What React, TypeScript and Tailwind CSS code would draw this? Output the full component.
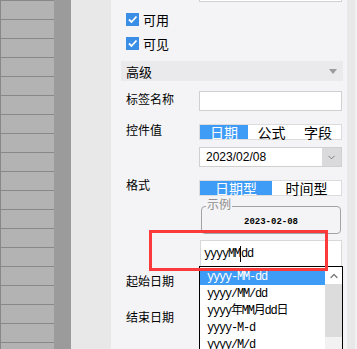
import { ChevronDown, ChevronUp } from 'lucide-react';

const cjk = { fontFamily: '"Noto Sans CJK SC", "Liberation Sans", sans-serif' };
const mono = { fontFamily: '"Liberation Mono", "Noto Sans CJK SC", monospace' };

function Check({ label }: { label: string }) {
  return (
    <div className="flex items-center h-[13px] pl-[5px] gap-[4px]">
      <div className="w-[13px] h-[13px] bg-[#3a8ee6] flex items-center justify-center">
        <svg width="11" height="11" viewBox="0 0 11 11">
          <path d="M2 5.5 L4.5 8 L9.5 2.5" stroke="white" strokeWidth="1.8" fill="none" />
        </svg>
      </div>
      <span className="text-[13px] text-black leading-none">{label}</span>
    </div>
  );
}

function Row({ label, children, cls }: { label: string; children?: React.ReactNode; cls: string }) {
  return (
    <div className={`flex items-center ${cls}`}>
      <div className="w-[78px] pl-[5px] text-[12px] text-black leading-none -mt-[5px]">{label}</div>
      <div className="w-[143px]">{children}</div>
    </div>
  );
}

function Tabs({ items, active, widths }: { items: string[]; active: number; widths: string[] }) {
  return (
    <div className="flex h-full border border-[#dcdcdf] bg-white">
      {items.map((t, i) => (
        <div
          key={t}
          className={`${widths[i]} flex items-center justify-center text-[14px] leading-none ${
            i === active ? 'bg-[#3f9cf6] text-white' : 'bg-white text-black'
          }`}
        >
          {t}
        </div>
      ))}
    </div>
  );
}

const formats = ['yyyy-MM-dd', 'yyyy/MM/dd', 'yyyy年MM月dd日', 'yyyy-M-d', 'yyyy/M/d'];

export default function App() {
  return (
    <div className="relative w-[357px] h-[349px] flex overflow-hidden" style={cjk}>
      {/* left strip */}
      <div className="w-[54px] h-full border-l border-[#888] bg-[#b3b3b3] flex flex-col">
        {Array.from({ length: 19 }).map((_, i) => (
          <div key={i} className="h-[19px] shrink-0 border-t border-[#888]" />
        ))}
      </div>
      <div className="w-[17px] h-full bg-[#9b9b9b]" />
      <div className="w-[40px] h-full bg-[#e8e8e8]" />

      {/* property panel */}
      <div className="w-[236px] h-full bg-[#f4f4f6] flex flex-col pl-[10px] pr-[4px]">
        <div className="ml-[78px] w-[143px] h-[2px] bg-white border-b border-x border-[#d0d0d0]" />
        <div className="mt-[11px]">
          <Check label="可用" />
        </div>
        <div className="mt-[11px]">
          <Check label="可见" />
        </div>

        <div className="mt-[11px] h-[20px] bg-[#eaeaec] flex items-center justify-between pl-[5px] pr-[6px]">
          <span className="text-[13px] leading-none text-black">高级</span>
          <svg width="8" height="5" viewBox="0 0 8 5">
            <path d="M0 0 H8 L4 5 Z" fill="#9b9b9b" />
          </svg>
        </div>

        <Row label="标签名称" cls="mt-[10px] h-[20px]">
          <div className="h-[20px] bg-white border border-[#d0d0d0]" />
        </Row>

        <Row label="控件值" cls="mt-[11px] h-[20px]">
          <Tabs items={['日期', '公式', '字段']} active={0} widths={['w-[48px]', 'w-[47px]', 'w-[46px]']} />
        </Row>

        <Row label="" cls="mt-[5px] h-[20px]">
          <div className="h-[20px] bg-white border border-[#d0d0d0] flex">
            <div className="flex-1 flex items-center pl-[6px] text-[12px] text-black leading-none" style={{ fontFamily: '"Liberation Sans", sans-serif' }}>
              2023/02/08
            </div>
            <div className="w-[19px] bg-[#dadadc] flex items-center justify-center">
              <ChevronDown size={11} strokeWidth={1.5} color="#555" />
            </div>
          </div>
        </Row>

        <Row label="格式" cls="mt-[10px] h-[21px]">
          <Tabs items={['日期型', '时间型']} active={0} widths={['w-[72px]', 'w-[69px]']} />
        </Row>

        <div className="mt-[8px] ml-[80px] w-[140px] h-[28px] border border-[#a3a3a3] rounded-[4px] relative flex items-center justify-center">
          <span className="absolute -top-[9px] left-[4px] px-[1px] bg-[#f4f4f6] text-[12px] leading-none text-[#8e8e8e]">示例</span>
          <span className="text-[9px] font-bold text-black leading-none mt-[4px]" style={mono}>
            2023-02-08
          </span>
        </div>

        <div className="mt-[6px] ml-[79px] w-[142px] h-[26px] bg-white border-x border-t border-[#d8d8d8] flex items-center pl-[3px]">
          <span className="text-[12px] tracking-[-1.2px] text-black leading-none" style={mono}>
            yyyyMM
          </span>
          <span className="w-px h-[16px] bg-black" />
          <span className="text-[12px] tracking-[-1.2px] text-black leading-none" style={mono}>
            dd
          </span>
        </div>

        <Row label="起始日期" cls="mt-[7px] h-[20px]" />
        <Row label="结束日期" cls="mt-[16px] h-[20px]" />
      </div>

      <div className="w-[8px] h-full bg-[#e8e8e8]" />
      <div className="w-[2px] h-full bg-[#f1f1f1]" />

      {/* format dropdown list */}
      <div className="absolute left-[199px] top-[266px] w-[144px] h-[90px] bg-white border border-black flex">
        <div className="flex-1 flex flex-col pt-px">
          {formats.map((f, i) => (
            <div
              key={f}
              className={`h-[17px] shrink-0 flex items-center pl-[7px] text-[12px] tracking-[-1.2px] leading-none ${
                i === 0 ? 'bg-[#3f9cf6] text-white' : 'text-black'
              }`}
              style={mono}
            >
              {f}
            </div>
          ))}
        </div>
        <div className="w-[17px] flex flex-col bg-[#f2f2f2]">
          <div className="h-[17px] flex items-center justify-center bg-white">
            <ChevronUp size={12} strokeWidth={2.5} color="#777" />
          </div>
          <div className="h-[53px] bg-[#dcdcdc]" />
        </div>
      </div>

      {/* red highlight */}
      <div className="absolute left-[149px] top-[230px] w-[179px] h-[41px] border-[3px] border-[#fb3b3b]" />
    </div>
  );
}
